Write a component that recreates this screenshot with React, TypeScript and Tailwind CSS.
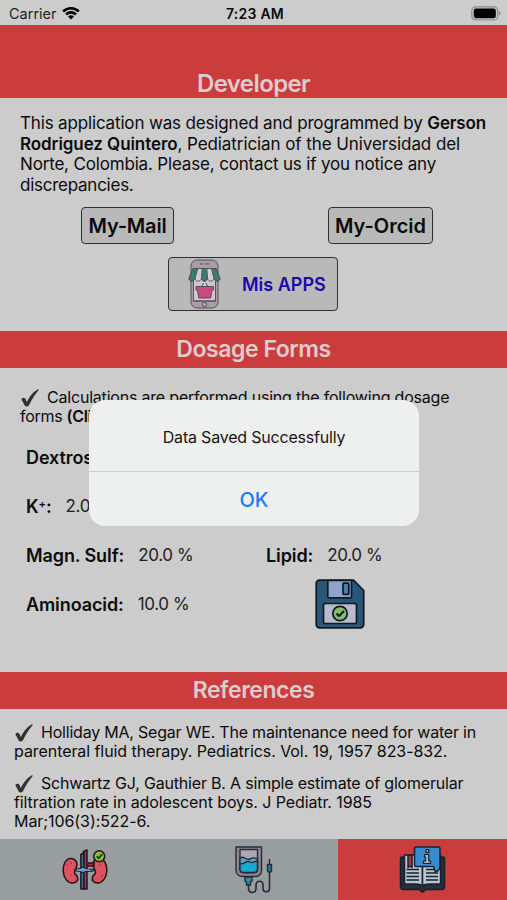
import type { ReactNode } from "react";

const Check = () => (
  <svg viewBox="0 0 20 18" className="mr-[7px] inline-block h-[18px] w-5 align-[-4px]">
    <path
      d="M1.500 10.200c.5-1.300 2.600-2 3.700-.7.7.9 1.100 2.500 1.600 3.500C8.800 8.600 12.500 3.300 17.500.400c.7-.3 1.500.1 1 .8C14.700 5.800 11.700 10.500 9.200 15.800c-.5 1.100-1.200 1.500-2.300 1.600-1 .1-1.700 0-2.300-1.100-.8-1.500-1.400-3.500-2.600-4.900-.3-.3-.6-.7-.5-1.200z"
      fill="#303030"
    />
  </svg>
);

const WifiIcon = () => (
  <svg viewBox="0 0 18 14" className="-mt-px h-[14px] w-[18px]">
    <path d="M.3 4.500a12.300 12.300 0 0 1 17.400 0l-1.800 1.900a9.700 9.700 0 0 0-13.800 0z" />
    <path d="M3.200 7.500a8.200 8.200 0 0 1 11.600 0L13 9.400a5.600 5.600 0 0 0-8 0z" />
    <path d="M6 10.500a4.200 4.200 0 0 1 6 0l-3 3.100z" />
  </svg>
);

const BatteryIcon = () => (
  <svg viewBox="0 0 30 15" className="h-[15px] w-[30px]">
    <rect x=".8" y=".8" width="26" height="13.200" rx="3.800" fill="#c4c4c4" stroke="#8d8d8d" strokeWidth="1.200" />
    <rect x="2.800" y="2.600" width="22" height="9.600" rx="2.200" />
    <path d="M28 5.300c2 .5 2 3.700 0 4.200z" fill="#8d8d8d" />
  </svg>
);

const StoreIcon = () => (
  <svg viewBox="0 0 33 50" className="h-[50px] w-[33px]" stroke="#5d4c59" strokeWidth="1">
    <rect x="3" y="1" width="27" height="48" rx="6" fill="#a79ea8" />
    <rect x="5.500" y="10" width="22" height="32" fill="#cdc8ce" />
    <path d="M12 5h3M17 5h4" />
    <path d="M5 9.500h23l4 10c-.5 3.500-5 3.500-6 0-1 3.500-5.500 3.500-6.500 0-1 3.500-5 3.500-6 0-1 3.500-5.500 3.500-6.500 0-1 3.500-5.500 3.500-6 0z" fill="#d2cdd2" />
    <path d="M5 9.500h4.800l-2.800 10c-1 3.500-5.500 3.500-6 0zM14.200 9.500h4.600l.7 10c-1 3.500-5 3.500-6 0zM23.500 9.500H28l4 10c-.5 3.500-5 3.500-6 0z" fill="#32806e" />
    <path d="m13.500 28 2-4M20 28l-2-4" fill="none" />
    <path d="M8 27.500h17.500v3.500h-1.500l-1.300 8H10.800l-1.300-8H8z" fill="#c64c7e" />
    <path d="M5.500 42h22" />
    <circle cx="16.500" cy="45.500" r="2.200" fill="#b4abb4" />
  </svg>
);

const DiskIcon = () => (
  <svg viewBox="0 0 50 50" className="-mt-px h-[50px] w-[50px]" stroke="#101820" strokeWidth="1.700" strokeLinejoin="round">
    <path d="M4.500 1.200H38.500L48.700 11.500v34a3.300 3.300 0 0 1-3.300 3.300H4.500a3.300 3.300 0 0 1-3.300-3.300v-41a3.300 3.300 0 0 1 3.300-3.300z" fill="#285778" />
    <path d="M12.800 1.500v16.200a1.200 1.200 0 0 0 1.200 1.200h21.300a1.200 1.200 0 0 0 1.200-1.200V1.500z" fill="#8fa3cc" />
    <rect x="28" y="4.200" width="5.800" height="11.200" rx=".8" fill="#4c7dac" />
    <rect x="8.500" y="24.500" width="33" height="20" rx="1.800" fill="#b9bbcc" />
    <circle cx="25" cy="34.500" r="7.200" fill="#86bd6a" />
    <path d="m21.500 34.500 2.500 2.500 5-5" fill="none" strokeWidth="2" />
  </svg>
);

const KidneysIcon = () => (
  <svg viewBox="0 0 46 42" className="h-[42px] w-[46px]" stroke="#20151c" strokeWidth="1.500" strokeLinejoin="round">
    <path d="M14.500 18c1.500-5-1.500-9-6-8.500C3.500 10 .8 16 1.200 22c.4 7 4.300 12 9.300 12 4 0 6-2.500 5-6-.5-2-3-2.500-3-4.500s1.300-3.300 2-5.500z" fill="#db5260" />
    <path d="M31.500 18c-1.500-5 1.500-9 6-8.500 5 .5 7.700 6.500 7.300 12.500-.4 7-4.300 12-9.300 12-4 0-6-2.500-5-6 .5-2 3-2.500 3-4.500s-1.300-3.300-2-5.500z" fill="#db5260" />
    <path d="M23 17h9v-3h-6" fill="#a42c42" />
    <path d="M21.500 2.500 25 1v39h-3.500z" fill="#c92743" />
    <path d="M18.900 5.500 21.800 4v36h-2.900z" fill="#347ca8" />
    <path d="M12.500 20.500 18 19.500l3-1.500 4 2 7 .5-1 1.800H24l-3 1.500-3-1.500-4.500-.3z" fill="#5593b6" strokeWidth="1" />
    <path d="M15 21h13" stroke="#75bbdc" strokeWidth="1" />
    <path d="M5 16h.1M9 26h.1M38 16h.1M40 27h.1M9 14h.1" strokeWidth="1.600" strokeLinecap="round" stroke="#952d43" />
    <circle cx="37.200" cy="7.300" r="5.500" fill="#85bd31" />
    <path d="m34.700 7.300 2 2 3.500-4" fill="none" />
  </svg>
);

const DripIcon = () => (
  <svg viewBox="0 0 38 48" className="h-[48px] w-[38px]" stroke="#282b36" strokeWidth="1.400" strokeLinejoin="round">
    <path d="M1 1h25.500v23c0 4-2.500 6.500-6.500 6.500H8c-4 0-7-2.500-7-6.500z" fill="#8d8791" />
    <path d="M5 3.500h17.500V23c0 2.200-1.300 3.500-3.500 3.500H8.500C6.300 26.500 5 25.200 5 23z" fill="#aaa8b2" />
    <path d="M5 12c4-3 6 3 10 1 3-1.500 4-1.500 7.500 0v10c0 2.200-1.300 3.500-3.500 3.500H8.500C6.300 26.500 5 25.200 5 23z" fill="#58a6c2" />
    <path d="M5 17.500c4 2 6-4 10-1.500 3 1.700 4-1 7.500-1V23c0 2.200-1.300 3.500-3.500 3.500H8.500C6.300 26.500 5 25.200 5 23z" fill="#19a9d0" />
    <path d="M10 31h7v4l-1.500 1v3h-4v-3L10 35z" fill="#3288a7" />
    <path d="M13.500 39v3c0 6 7.500 6 7.500 0v-3c0-5 7-5 7 0v3c0 5 6.500 5 6.500 0V25" fill="none" strokeWidth="1.600" />
    <path d="M32.500 18.500h4v6l-1 1.500h-2l-1-1.500zM34.500 13v5" fill="#2675a8" />
  </svg>
);

const BookIcon = () => (
  <svg viewBox="0 0 48 48" className="h-[48px] w-[48px]" stroke="#17212d" strokeWidth="1.500" strokeLinejoin="round">
    <path d="M4 11H3c-1 0-1.500 1-1.500 2v27.500c0 2 1 3 3 3H20l3.500 2.700 3.500-2.700h15.500c2 0 3-1 3-3V13c0-1-.5-2-1.500-2z" fill="#292e39" />
    <path d="M5.500 9H17c4 0 5.500 1 6.500 3v28c-2-2-4-2-7.500-2H5.500z" fill="#b9c5d0" />
    <path d="M41.500 9H30c-4 0-5.500 1-6.500 3v28c2-2 4-2 7.500-2h10.500z" fill="#b9c5d0" />
    <path d="M7.500 23.500H20M7.500 27H20M7.500 30.500H20M7.500 34H20M27 23.500h12M27 27h12M27 30.500h12M27 34h12" strokeWidth="1.300" />
    <path d="M9 9h4v12.500L11 20l-2 1.500z" fill="#ba2e3b" />
    <path d="M17 1h22.500A1.500 1.500 0 0 1 41 2.500v17c0 3-1.500 5.500-4.500 6.500-1-1.500-1.200-3.500-2-5.500H17a1.500 1.500 0 0 1-1.500-1.500V2.500A1.500 1.500 0 0 1 17 1z" fill="#378bd0" />
    <path d="M25.500 8.500h4.300V15h1.700v2.500h-7V15h2v-4h-1zM27 3.500h2.800v2.800H27z" fill="#a3b9c5" strokeWidth="1.200" />
  </svg>
);

const SectionTitle = ({ children }: { children: ReactNode }) => (
  <h2 className="flex h-[37px] shrink-0 items-center justify-center bg-[#cb3c3c] text-[23px] leading-none font-semibold tracking-[-0.45px] text-[#dfcccc]">
    {children}
  </h2>
);

const Dose = ({ label, value }: { label: ReactNode; value: string }) => (
  <div className="flex h-[49px] items-center gap-[14px] whitespace-nowrap">
    <span className="text-[18px] font-semibold tracking-[-0.1px]">{label}</span>
    <span className="pt-px text-[17px] tracking-[-0.35px] text-[#222]">{value}</span>
  </div>
);

const App = () => {
  return (
    <div className="relative flex h-[900px] w-[507px] flex-col overflow-hidden bg-[#cccccc] font-['Inter',sans-serif] text-[#0b0b0b]">
      <div className="grid h-[25px] shrink-0 grid-cols-3 items-center pt-[2px] pr-[6px] pl-[9px] text-[14px]">
        <div className="flex items-center gap-[5px] text-[#222]">
          <span className="text-[14.500px]">Carrier</span>
          <WifiIcon />
        </div>
        <span className="text-center font-semibold tracking-[0.25px]">7:23 AM</span>
        <div className="flex justify-end">
          <BatteryIcon />
        </div>
      </div>

      <header className="flex h-[73px] shrink-0 items-end justify-center bg-[#cb3c3c] text-[24px] leading-[28px] font-semibold tracking-[-0.6px] text-[#dfcccc]">
        Developer
      </header>

      <section className="flex h-[233px] shrink-0 flex-col pt-[15px]">
        <p className="pl-5 text-[17px] leading-[20.600px] whitespace-nowrap">
          <span className="tracking-[-0.16px]">This application was designed and programmed by <b className="font-semibold">Gerson</b></span>
          <br />
          <span className="tracking-[-0.08px]"><b className="font-semibold">Rodriguez Quintero</b>, Pediatrician of the Universidad del</span>
          <br />
          <span className="tracking-[-0.17px]">Norte, Colombia. Please, contact us if you notice any</span>
          <br />
          <span className="tracking-[-0.25px]">discrepancies.</span>
        </p>
        <div className="mt-[11.600px] flex justify-between pr-[74px] pl-[81px] text-[20px] font-semibold">
          <button className="h-[37px] w-[93px] rounded-[4px] border-[1.500px] border-[#303030] bg-[#b9b9b9] pt-0.5 tracking-[-0.2px]">My-Mail</button>
          <button className="h-[37px] w-[105px] rounded-[4px] border-[1.500px] border-[#303030] bg-[#b9b9b9] pt-0.5">My-Orcid</button>
        </div>
        <button className="mt-[13px] ml-[168px] flex h-[54px] w-[170px] items-center gap-[21px] rounded-[4px] border-[1.500px] border-[#303030] bg-[#b9b9b9] pl-[19px] text-[18px] font-semibold text-[#1808ad]">
          <StoreIcon />
          <span className="pt-0.5">Mis APPS</span>
        </button>
      </section>

      <SectionTitle>Dosage Forms</SectionTitle>
      <section className="h-[304px] shrink-0 pt-[20px]">
        <p className="pl-5 text-[16px] leading-[19px] whitespace-nowrap">
          <Check />
          <span className="tracking-[-0.2px]">Calculations are performed using the following dosage</span>
          <br />
          <span className="tracking-[-0.3px]">forms <b className="font-semibold">(Click</b></span>
        </p>
        <div className="mt-[6.500px] grid grid-cols-[240px_1fr] pl-[26px]">
          <Dose label="Dextrose:" value="" />
          <div />
          <Dose label={<>K<sup className="top-[-5px] text-[11px]">+</sup>:</>} value="2.0" />
          <div />
          <Dose label="Magn. Sulf:" value="20.0 %" />
          <Dose label="Lipid:" value="20.0 %" />
          <Dose label="Aminoacid:" value="10.0 %" />
          <div className="pl-[49px]">
            <DiskIcon />
          </div>
        </div>
      </section>

      <SectionTitle>References</SectionTitle>
      <section className="h-[130px] shrink-0 pt-[14px] pl-[14px] text-[16px] leading-[19px] whitespace-nowrap">
        <p>
          <Check />
          <span className="tracking-[-0.21px]">Holliday MA, Segar WE. The maintenance need for water in</span>
          <br />
          <span className="tracking-[-0.07px]">parenteral fluid therapy. Pediatrics. Vol. 19, 1957 823-832.</span>
        </p>
        <p className="mt-[13px]">
          <Check />
          <span className="tracking-[-0.19px]">Schwartz GJ, Gauthier B. A simple estimate of glomerular</span>
          <br />
          <span className="tracking-[-0.1px]">filtration rate in adolescent boys. J Pediatr. 1985</span>
          <br />
          <span className="tracking-[-0.07px]">Mar;106(3):522-6.</span>
        </p>
      </section>

      <nav className="grid h-[61px] shrink-0 grid-cols-3 bg-[#989d9f]">
        <button className="flex items-start justify-center pt-[10px]">
          <KidneysIcon />
        </button>
        <button className="flex items-start justify-center pt-[7px]">
          <DripIcon />
        </button>
        <button className="flex items-start justify-center bg-[#cb3c3c] pt-[7px]">
          <BookIcon />
        </button>
      </nav>

      <div role="alertdialog" className="absolute top-[400px] left-[89px] flex h-[126px] w-[330px] flex-col overflow-hidden rounded-[16px] bg-[#eeefef]">
        <p className="flex h-[72px] items-center justify-center border-b border-[#cdcdcd] pt-0.5 text-[16px] tracking-[-0.2px] text-[#151515]">
          Data Saved Successfully
        </p>
        <button className="flex-1 pt-0.5 text-[20px] font-medium text-[#147efb]">OK</button>
      </div>
    </div>
  );
};

export default App;
